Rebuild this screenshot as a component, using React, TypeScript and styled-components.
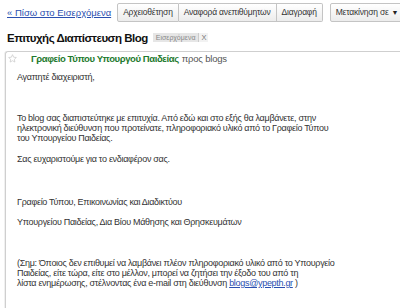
import React from "react";
import styled, { createGlobalStyle } from "styled-components";

const GlobalStyle = createGlobalStyle`
  html, body {
    margin: 0;
    padding: 0;
    background: #ffffff;
    overflow: hidden;
  }
  body {
    font-family: "Liberation Sans", Arial, sans-serif;
    color: #222;
  }
`;

const Page = styled.div`
  width: 400px;
  height: 308px;
  overflow: hidden;
  background: #fff;
`;

const Toolbar = styled.div`
  display: flex;
  align-items: center;
  flex-wrap: nowrap;
  gap: 5px;
  padding: 4px 0 0 7px;
  height: 17px;
  white-space: nowrap;
`;

const BackLink = styled.a`
  font-size: 9.5px;
  color: #2a4fb0;
  text-decoration: underline;
  margin-right: 1px;
  flex-shrink: 0;
`;

const ButtonGroup = styled.div`
  display: flex;
  flex-shrink: 0;
  margin-right: 2px;
`;

const Button = styled.div<{ $first?: boolean; $last?: boolean }>`
  height: 17px;
  line-height: 17px;
  padding: 0 5px;
  font-size: 8.5px;
  letter-spacing: -0.2px;
  color: #333;
  background: linear-gradient(#ffffff, #ececec);
  border: 1px solid #c4c4c4;
  border-left: ${(p) => (p.$first ? "1px solid #c4c4c4" : "none")};
  border-radius: ${(p) =>
    p.$first ? "2px 0 0 2px" : p.$last ? "0 2px 2px 0" : "0"};
  flex-shrink: 0;
`;

const Caret = styled.span`
  font-size: 7px;
  margin-left: 3px;
  color: #222;
`;

const TitleRow = styled.div`
  display: flex;
  align-items: center;
  gap: 5px;
  padding: 8px 0 0 7px;
  height: 17px;
`;

const Title = styled.h1`
  margin: 0;
  font-size: 11.5px;
  letter-spacing: -0.5px;
  font-weight: bold;
  color: #111;
`;

const Label = styled.span`
  display: inline-flex;
  align-items: stretch;
  height: 9px;
  line-height: 9px;
  font-size: 7px;
  color: #888;
`;

const LabelName = styled.span`
  background: #e6e6e6;
  padding: 0 3px;
`;

const LabelClose = styled.span`
  border-left: 1px solid #ccc;
  background: #f2f2f2;
  padding: 0 2px;
  color: #777;
  font-size: 7.5px;
`;

const Message = styled.div`
  margin: 5px 0 0 5px;
  border-top: 1px solid #cfcfcf;
  border-left: 1px solid #cfcfcf;
  border-top-left-radius: 3px;
  box-shadow: -1px 0 0 #f0f0f0;
  height: 300px;
`;

const Header = styled.div`
  display: flex;
  align-items: center;
  height: 13px;
  padding: 0 0 0 2px;
`;

const Star = styled.svg`
  width: 9px;
  height: 9px;
  margin-right: 14px;
`;

const Sender = styled.span`
  font-size: 9.5px;
  letter-spacing: -0.4px;
  font-weight: bold;
  color: #1e7a2e;
`;

const Recipient = styled.span`
  font-size: 9.5px;
  letter-spacing: -0.2px;
  color: #555;
  margin-left: 3px;
`;

const Body = styled.div`
  padding: 0 0 0 11px;
  font-size: 9px;
  letter-spacing: -0.3px;
  line-height: 10px;
  color: #333;
`;

const Para = styled.p<{ $gap: number }>`
  margin: ${(p) => p.$gap}px 0 0 0;
`;

const Mail = styled.a`
  color: #2a4fb0;
  text-decoration: underline;
`;

export default function App() {
  return (
    <Page>
      <GlobalStyle />
      <Toolbar>
        <BackLink>« Πίσω στο Εισερχόμενα</BackLink>
        <ButtonGroup>
          <Button $first>Αρχειοθέτηση</Button>
          <Button>Αναφορά ανεπιθύμητων</Button>
          <Button $last>Διαγραφή</Button>
        </ButtonGroup>
        <ButtonGroup>
          <Button $first>
            Μετακίνηση σε<Caret>▼</Caret>
          </Button>
          <Button $last>
            Ετικέτες<Caret>▼</Caret>
          </Button>
        </ButtonGroup>
      </Toolbar>

      <TitleRow>
        <Title>Επιτυχής Διαπίστευση Blog</Title>
        <Label>
          <LabelName>Εισερχόμενα</LabelName>
          <LabelClose>X</LabelClose>
        </Label>
      </TitleRow>

      <Message>
        <Header>
          <Star viewBox="0 0 20 20">
            <path
              d="M10 1.5l2.6 5.6 6 .7-4.5 4.1 1.2 6-5.3-3-5.3 3 1.2-6L1.4 7.8l6-.7z"
              fill="none"
              stroke="#c8c8c8"
              strokeWidth="1.6"
              strokeLinejoin="round"
            />
          </Star>
          <Sender>Γραφείο Τύπου Υπουργού Παιδείας</Sender>
          <Recipient>προς blogs</Recipient>
        </Header>
        <Body>
          <Para $gap={7}>Αγαπητέ διαχειριστή,</Para>
          <Para $gap={31}>
            Το blog σας διαπιστεύτηκε με επιτυχία. Από εδώ και στο εξής θα λαμβάνετε, στην
            <br />
            ηλεκτρονική διεύθυνση που προτείνατε, πληροφοριακό υλικό από το Γραφείο Τύπου
            <br />
            του Υπουργείου Παιδείας.
          </Para>
          <Para $gap={11}>Σας ευχαριστούμε για το ενδιαφέρον σας.</Para>
          <Para $gap={33}>Γραφείο Τύπου, Επικοινωνίας και Διαδικτύου</Para>
          <Para $gap={10}>Υπουργείου Παιδείας, Δια Βίου Μάθησης και Θρησκευμάτων</Para>
          <Para $gap={31}>
            (Σημ: Όποιος δεν επιθυμεί να λαμβάνει πλέον πληροφοριακό υλικό από το Υπουργείο
            <br />
            Παιδείας, είτε τώρα, είτε στο μέλλον, μπορεί να ζητήσει την έξοδο του από τη
            <br />
            λίστα ενημέρωσης, στέλνοντας ένα e-mail στη διεύθυνση{" "}
            <Mail>blogs@ypepth.gr</Mail> )
          </Para>
        </Body>
      </Message>
    </Page>
  );
}
